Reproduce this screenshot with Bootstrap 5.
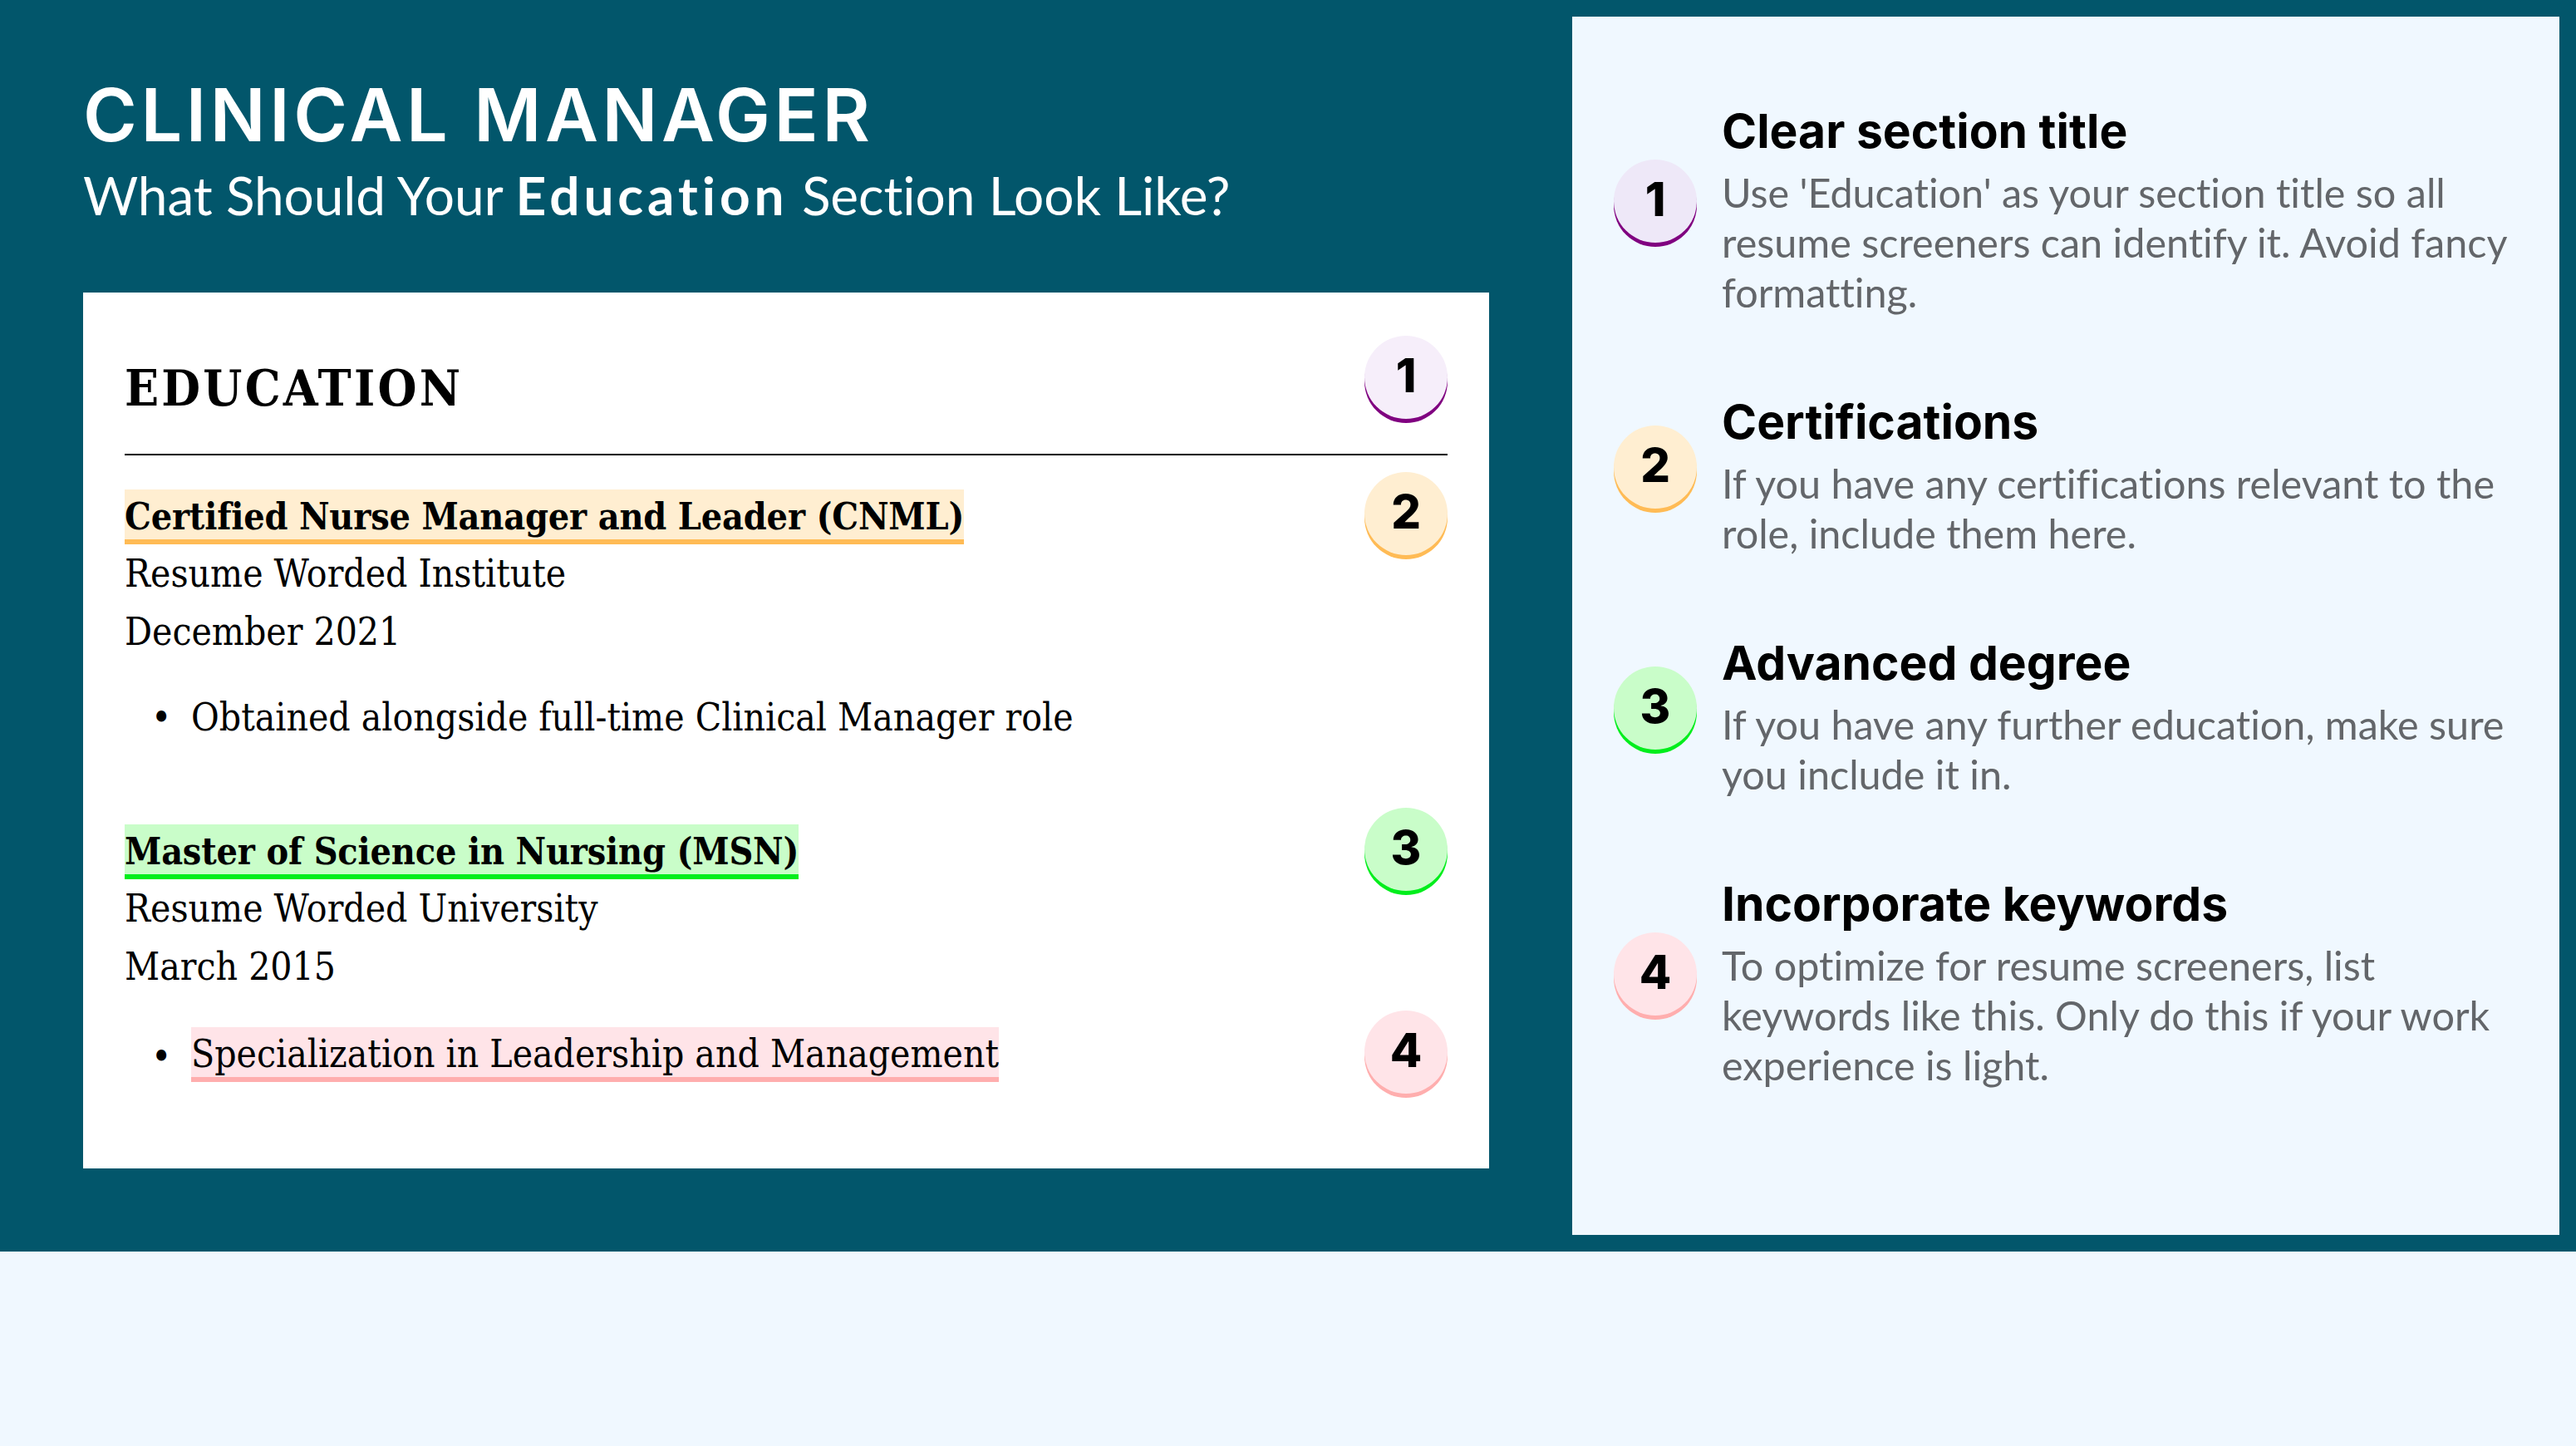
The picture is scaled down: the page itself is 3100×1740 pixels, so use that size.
<!DOCTYPE html>
<html lang="en"><head><meta charset="utf-8"><title>Clinical Manager</title>
<link href="https://cdn.jsdelivr.net/npm/bootstrap@5.3.0/dist/css/bootstrap.min.css" rel="stylesheet">
<style>
html,body{margin:0;background:#f0f8ff}
body{width:3100px;height:1740px;overflow:hidden;font-family:"Lato",sans-serif;font-variant-ligatures:none}
.stage{height:1506px;background:#02566b;padding:20px 20px 20px 100px}
.leftcol{width:1692px;margin-right:100px}
.headline{font-family:"Inter",sans-serif;font-size:88px;line-height:106px;font-weight:600;color:#fff;letter-spacing:4.6px;margin:0;padding-top:65px}
.subline{font-family:"Lato",sans-serif;font-size:64px;line-height:88px;color:#fff;margin:0;font-weight:400;letter-spacing:-.1px}
.subline b{font-weight:700;letter-spacing:4.9px}
.sheet{background:#fff;height:1054px;margin-top:73px;padding:0 50px;font-family:"DejaVu Serif Condensed","DejaVu Serif",serif;font-size:45.8px;color:#000}
.sec-head{height:196px;border-bottom:2px solid #000;padding-top:52px}
.sec-name{font-size:60px;font-weight:700;letter-spacing:3.2px;line-height:80px;margin:23px 0 0}
.coin{width:100px;height:100px;border-radius:50%;flex:none;font-family:"Inter",sans-serif;font-weight:800;font-size:56px;color:#000;display:flex;align-items:center;justify-content:center;padding-bottom:4px}
.tone1{background:#f6eefa;box-shadow:0 5px 0 #800080}
.tone1b{background:#eee8f8;box-shadow:0 5px 0 #800080}
.tone2{background:#ffeed1;box-shadow:0 5px 0 #ffbb55}
.tone3{background:#c9fdc9;box-shadow:0 5px 0 #00ee1c}
.tone4{background:#ffe4e8;box-shadow:0 5px 0 #ffaeae}
.entry{line-height:70px}
.entry-a{margin-top:20px}
.entry-a .txt{margin-top:21px;margin-bottom:74px}
.entry-b .txt{margin-top:20px;margin-bottom:18px}
.entry-c .txt{margin-top:20px}
.entry-line{margin:0}
.mark-hl{display:block;width:fit-content;line-height:64px;height:66px}
.mark-bold{font-weight:700;font-size:44.5px;letter-spacing:-.2px}
.hl2{background:#ffeed1;border-bottom:6px solid #ffbb55}
.hl3{background:#c9fdc9;border-bottom:6px solid #00ee1c}
.hl4{background:#ffe4e8;border-bottom:6px solid #ffaeae}
.bul{margin:0;padding:0;list-style:none}
.bul li{display:flex}
.bul li::before{content:"\2022";flex:none;width:48px;margin-left:32px}
.gap-a{margin-top:33px}
.side{width:1188px;height:1466px;background:#f0f8ff;padding:83px 40px 0 50px}
.point{gap:30px;margin-bottom:72px}
.point-title{font-family:"Inter",sans-serif;font-size:57px;line-height:70px;font-weight:700;color:#000;margin:20px 0 8px}
.point-text{font-size:48.5px;line-height:60px;color:#63666a;margin:0}
</style></head><body>
<div class="stage d-flex">
  <div class="leftcol">
    <h1 class="headline">CLINICAL MANAGER</h1>
    <h2 class="subline">What Should Your <b>Education</b> Section Look Like?</h2>
    <div class="sheet">
      <div class="sec-head d-flex justify-content-between align-items-start">
        <h3 class="sec-name">EDUCATION</h3>
        <div class="coin tone1">1</div>
      </div>
      <div class="entry entry-a d-flex justify-content-between align-items-start">
        <div class="txt">
          <span class="mark-hl mark-bold hl2">Certified Nurse Manager and Leader (CNML)</span>
          <p class="entry-line">Resume Worded Institute</p>
          <p class="entry-line">December 2021</p>
          <ul class="bul gap-a"><li>Obtained alongside full-time Clinical Manager role</li></ul>
        </div>
        <div class="coin tone2">2</div>
      </div>
      <div class="entry entry-b d-flex justify-content-between align-items-start">
        <div class="txt">
          <span class="mark-hl mark-bold hl3">Master of Science in Nursing (MSN)</span>
          <p class="entry-line">Resume Worded University</p>
          <p class="entry-line">March 2015</p>
        </div>
        <div class="coin tone3">3</div>
      </div>
      <div class="entry entry-c d-flex justify-content-between align-items-start">
        <div class="txt">
          <ul class="bul"><li><span class="mark-hl hl4">Specialization in Leadership and Management</span></li></ul>
        </div>
        <div class="coin tone4">4</div>
      </div>
    </div>
  </div>
  <div class="side">
    <div class="point d-flex align-items-center"><div class="coin tone1b">1</div><div><h4 class="point-title">Clear section title</h4><p class="point-text">Use 'Education' as your section title so all resume screeners can identify it. Avoid fancy formatting.</p></div></div>
    <div class="point d-flex align-items-center"><div class="coin tone2">2</div><div><h4 class="point-title">Certifications</h4><p class="point-text">If you have any certifications relevant to the role, include them here.</p></div></div>
    <div class="point d-flex align-items-center"><div class="coin tone3">3</div><div><h4 class="point-title">Advanced degree</h4><p class="point-text">If you have any further education, make sure you include it in.</p></div></div>
    <div class="point d-flex align-items-center"><div class="coin tone4">4</div><div><h4 class="point-title">Incorporate keywords</h4><p class="point-text">To optimize for resume screeners, list keywords like this. Only do this if your work experience is light.</p></div></div>
  </div>
</div>
<script src="https://cdn.jsdelivr.net/npm/bootstrap@5.3.0/dist/js/bootstrap.bundle.min.js"></script>
</body></html>
